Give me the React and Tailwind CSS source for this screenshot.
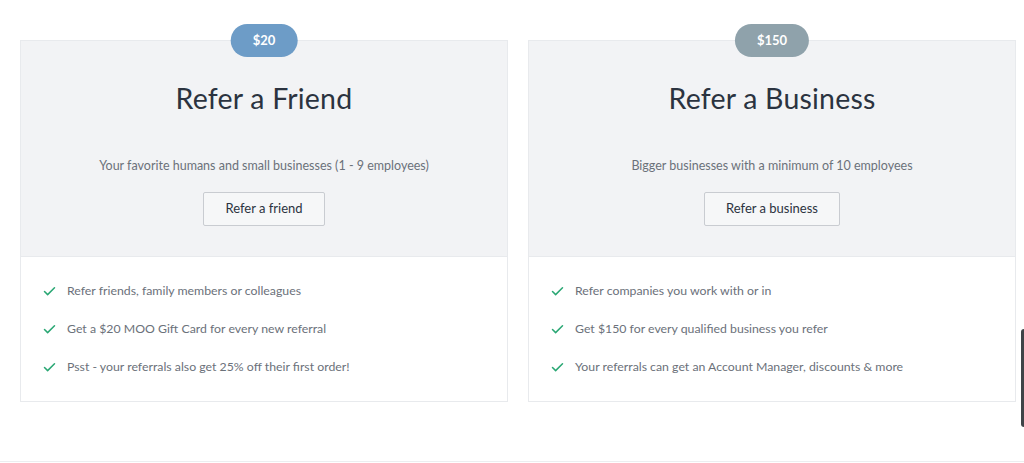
import { Check } from 'lucide-react'

const cards = [
  {
    badge: '$20',
    badgeColor: 'bg-[#6d9cc7]',
    title: 'Refer a Friend',
    subtitle: 'Your favorite humans and small businesses (1 - 9 employees)',
    cta: 'Refer a friend',
    items: [
      'Refer friends, family members or colleagues',
      'Get a $20 MOO Gift Card for every new referral',
      'Psst - your referrals also get 25% off their first order!',
    ],
  },
  {
    badge: '$150',
    badgeColor: 'bg-[#8fa2ab]',
    title: 'Refer a Business',
    subtitle: 'Bigger businesses with a minimum of 10 employees',
    cta: 'Refer a business',
    items: [
      'Refer companies you work with or in',
      'Get $150 for every qualified business you refer',
      'Your referrals can get an Account Manager, discounts & more',
    ],
  },
]

function ReferCard({ card }) {
  return (
    <div className="relative w-[488px] border border-[#e8eaed] bg-white">
      <span
        className={`absolute left-1/2 -translate-x-1/2 -top-[17px] h-[33px] px-[22px] rounded-full ${card.badgeColor} text-white text-[13px] font-bold flex items-center`}
      >
        {card.badge}
      </span>
      <div className="bg-[#f2f3f5] flex flex-col items-center pt-[40px] pb-[30px]">
        <h2 className="text-[28.5px] leading-[34px] text-[#2b3340] tracking-[0.2px]">{card.title}</h2>
        <p className="mt-[42px] mb-[-1px] text-[12.5px] leading-[18px] text-[#6b717a]">{card.subtitle}</p>
        <button className="mt-[18px] h-[34px] px-[21px] border border-[#c9ccd1] rounded-[2px] bg-[#f6f7f8] text-[13px] text-[#2b3340]">
          {card.cta}
        </button>
      </div>
      <ul className="flex flex-col gap-[18px] pl-[21px] pr-[21px] pt-[24px] pb-[24px] border-t border-[#e8eaed]">
        {card.items.map((item, i) => (
          <li key={i} className="flex items-center gap-[10px] h-[20px] text-[12.3px] text-[#6b717a]">
            <Check size={15} strokeWidth={2.4} className="text-[#2aa774]" />
            {item}
          </li>
        ))}
      </ul>
    </div>
  )
}

export default function App() {
  return (
    <div className="relative w-[1024px] h-[463px] bg-white overflow-hidden font-['Lato','Noto_Sans',sans-serif]">
      <div className="flex gap-[20px] pl-[20px] pt-[40px]">
        {cards.map((c, i) => (
          <ReferCard key={i} card={c} />
        ))}
      </div>
      <div className="absolute left-0 right-0 top-[461px] border-t border-[#eceef0]" />
      <div className="absolute right-0 top-[329px] w-[3px] h-[98px] rounded-l-[3px] bg-[#3f4448]" />
    </div>
  )
}
